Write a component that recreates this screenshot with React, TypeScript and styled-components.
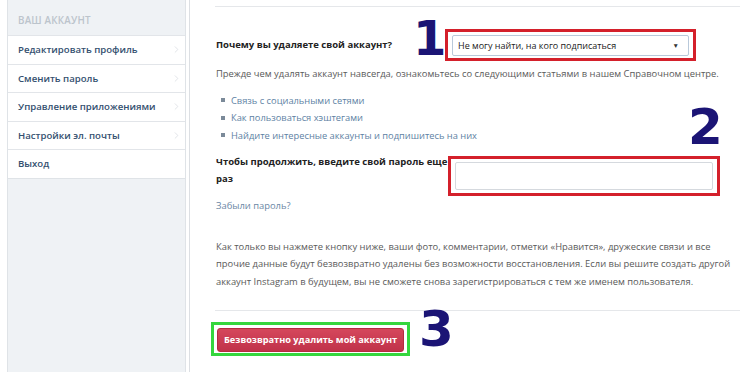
import React from "react";
import styled, { createGlobalStyle } from "styled-components";
import { ChevronRight } from "lucide-react";

const GlobalStyle = createGlobalStyle`
  html, body {
    margin: 0;
    padding: 0;
    background: #ffffff;
  }
  body {
    width: 740px;
    height: 372px;
    overflow: hidden;
    font-family: "Open Sans", "Noto Sans", Arial, sans-serif;
  }
`;

const Page = styled.div`
  display: flex;
  width: 740px;
  height: 372px;
  overflow: hidden;
`;

const SideColumn = styled.aside`
  width: 190px;
  flex-shrink: 0;
  box-sizing: border-box;
  padding-left: 7px;
  padding-right: 3px;
  border-right: 1px solid #dcdfe3;
  display: flex;
`;

const SidePanel = styled.div`
  flex: 1;
  background: #eff2f5;
  border-left: 1px solid #dfe3e7;
  border-right: 1px solid #dfe3e7;
  display: flex;
  flex-direction: column;
`;

const SideHeader = styled.div`
  height: 35px;
  box-sizing: border-box;
  padding: 14px 0 0 10px;
  font-size: 9.8px;
  font-weight: 600;
  letter-spacing: 0.2px;
  color: #bcc4cc;
  text-transform: uppercase;
`;

const SideList = styled.ul`
  list-style: none;
  margin: 0;
  padding: 0;
  background: #ffffff;
  border-bottom: 1px solid #dfe3e7;
`;

const SideItem = styled.li`
  height: 28.5px;
  box-sizing: border-box;
  border-top: 1px solid #e2e5e9;
  display: flex;
  align-items: center;
  justify-content: space-between;
  padding: 0 3px 0 10px;
  font-size: 9.6px;
  font-weight: 600;
  color: #34506f;
`;

const Main = styled.main`
  flex: 1;
  padding-left: 26px;
  display: flex;
  flex-direction: column;
  color: #555;
`;

const Rule = styled.div<{ $top: number }>`
  height: 1px;
  background: #e5e7ea;
  margin-top: ${(p) => p.$top}px;
  margin-left: -1px;
`;

const FieldRow = styled.div<{ $top: number }>`
  display: flex;
  align-items: flex-start;
  margin-top: ${(p) => p.$top}px;
  position: relative;
`;

const FieldLabel = styled.label<{ $w: number; $top: number }>`
  width: ${(p) => p.$w}px;
  flex-shrink: 0;
  margin-top: ${(p) => p.$top}px;
  font-size: 9.5px;
  font-weight: 700;
  line-height: 16.5px;
  color: #222;
`;

const RedFrame = styled.div<{ $w: number; $h: number }>`
  width: ${(p) => p.$w}px;
  height: ${(p) => p.$h}px;
  box-sizing: border-box;
  border: 3px solid #d4202b;
  padding: 3px 4px;
  display: flex;
`;

const SelectBox = styled.div`
  flex: 1;
  height: 21px;
  box-sizing: border-box;
  border: 1px solid #b9c9da;
  border-radius: 2px;
  background: #fff;
  display: flex;
  align-items: center;
  justify-content: space-between;
  padding: 0 9px 0 5px;
  font-size: 9px;
  color: #222;
`;

const Caret = styled.span`
  font-size: 6.5px;
  color: #333;
`;

const PasswordBox = styled.div`
  flex: 1;
  border: 1px solid #d5d9de;
  border-radius: 2px;
  background: #fff;
`;

const Text = styled.p<{ $top: number }>`
  margin: ${(p) => p.$top}px 0 0;
  font-size: 9.4px;
  line-height: 17.5px;
  color: #5a5a5a;
`;

const Links = styled.ul`
  list-style: none;
  margin: 9px 0 0;
  padding: 0 0 0 5px;
`;

const LinkItem = styled.li`
  display: flex;
  align-items: center;
  height: 17.5px;
  font-size: 9.3px;
  color: #5d7fa3;

  &::before {
    content: "";
    width: 4px;
    height: 4px;
    background: #7b8a99;
    margin-right: 6px;
  }
`;

const Forgot = styled.a`
  display: block;
  margin-top: 1px;
  font-size: 9.4px;
  line-height: 17.5px;
  color: #6b87a5;
  text-decoration: none;
`;

const ButtonRow = styled.div`
  margin-top: 11px;
  margin-left: -5px;
  position: relative;
  display: flex;
`;

const GreenFrame = styled.div`
  border: 3px solid #35d63d;
  padding: 1px 3px;
`;

const DangerButton = styled.button`
  height: 24px;
  padding: 0 6px;
  border: 1px solid #b42b40;
  border-radius: 3px;
  background: linear-gradient(#d5475c, #c0324a);
  color: #fff;
  font-family: inherit;
  font-size: 9.2px;
  font-weight: 700;
`;

const Mark = styled.span<{ $x: number; $y: number; $size: number }>`
  position: absolute;
  left: ${(p) => p.$x}px;
  top: ${(p) => p.$y}px;
  font-family: "DejaVu Sans", sans-serif;
  font-weight: 700;
  font-size: ${(p) => p.$size}px;
  line-height: 1;
  color: #1b1475;
`;

const menu = [
  "Редактировать профиль",
  "Сменить пароль",
  "Управление приложениями",
  "Настройки эл. почты",
  "Выход",
];

const links = [
  "Связь с социальными сетями",
  "Как пользоваться хэштегами",
  "Найдите интересные аккаунты и подпишитесь на них",
];

export default function App() {
  return (
    <>
      <GlobalStyle />
      <Page>
        <SideColumn>
          <SidePanel>
            <SideHeader>Ваш аккаунт</SideHeader>
            <SideList>
              {menu.map((item, i) => (
                <SideItem key={item}>
                  {item}
                  {i < menu.length - 1 && <ChevronRight size={11} color="#d3d8dd" strokeWidth={1.5} />}
                </SideItem>
              ))}
            </SideList>
          </SidePanel>
        </SideColumn>

        <Main>
          <Rule $top={6} />

          <FieldRow $top={22}>
            <FieldLabel $w={229} $top={8}>Почему вы удаляете свой аккаунт?</FieldLabel>
            <RedFrame $w={251} $h={32}>
              <SelectBox>
                Не могу найти, на кого подписаться
                <Caret>▼</Caret>
              </SelectBox>
            </RedFrame>
            <Mark $x={197} $y={-15} $size={48}>1</Mark>
          </FieldRow>

          <Text $top={4}>
            Прежде чем удалять аккаунт навсегда, ознакомьтесь со следующими статьями в нашем Справочном центре.
          </Text>

          <Links>
            {links.map((l) => (
              <LinkItem key={l}>{l}</LinkItem>
            ))}
          </Links>

          <FieldRow $top={12}>
            <FieldLabel $w={232} $top={-2}>Чтобы продолжить, введите свой пароль еще раз</FieldLabel>
            <RedFrame $w={272} $h={40}>
              <PasswordBox />
            </RedFrame>
            <Mark $x={472} $y={-54} $size={50}>2</Mark>
          </FieldRow>

          <Forgot href="#">Забыли пароль?</Forgot>

          <Text $top={23}>
            Как только вы нажмете кнопку ниже, ваши фото, комментарии, отметки «Нравится», дружеские связи и все
            прочие данные будут безвозвратно удалены без возможности восстановления. Если вы решите создать другой
            аккаунт Instagram в будущем, вы не сможете снова зарегистрироваться с тем же именем пользователя.
          </Text>

          <Rule $top={20} />

          <ButtonRow>
            <GreenFrame>
              <DangerButton>Безвозвратно удалить мой аккаунт</DangerButton>
            </GreenFrame>
            <Mark $x={208} $y={-18} $size={50}>3</Mark>
          </ButtonRow>
        </Main>
      </Page>
    </>
  );
}
